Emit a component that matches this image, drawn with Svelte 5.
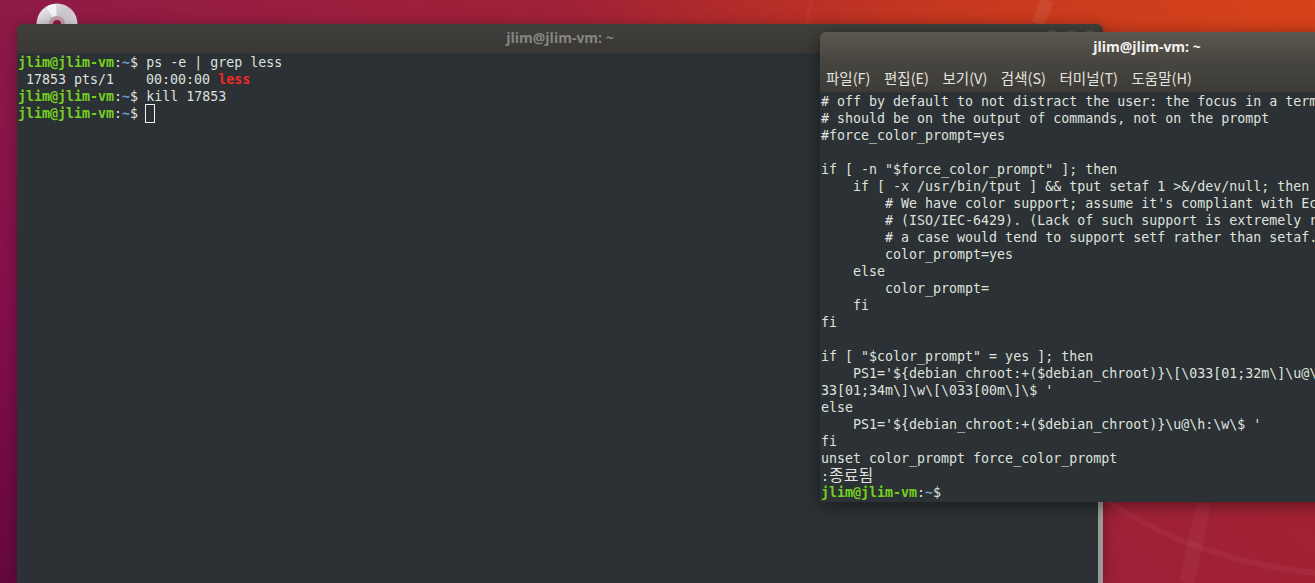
<script lang="ts">
  type Seg = { t: string; c?: string };

  const prompt: Seg[] = [
    { t: "jlim@jlim-vm", c: "green" },
    { t: ":" },
    { t: "~", c: "blue" },
    { t: "$" },
  ];

  const leftLines: Seg[][] = [
    [...prompt, { t: " ps -e | grep less" }],
    [{ t: " 17853 pts/1    00:00:00 " }, { t: "less", c: "red" }],
    [...prompt, { t: " kill 17853" }],
    [...prompt, { t: " " }],
  ];

  const rightLines: Seg[][] = [
    "# off by default to not distract the user: the focus in a terminal window",
    "# should be on the output of commands, not on the prompt",
    "#force_color_prompt=yes",
    "",
    'if [ -n "$force_color_prompt" ]; then',
    "    if [ -x /usr/bin/tput ] && tput setaf 1 >&/dev/null; then",
    "        # We have color support; assume it's compliant with Ecma-48",
    "        # (ISO/IEC-6429). (Lack of such support is extremely rare, and such",
    "        # a case would tend to support setf rather than setaf.)",
    "        color_prompt=yes",
    "    else",
    "        color_prompt=",
    "    fi",
    "fi",
    "",
    'if [ "$color_prompt" = yes ]; then',
    "    PS1='${debian_chroot:+($debian_chroot)}\\[\\033[01;32m\\]\\u@\\h\\[\\033[00m\\]:\\[\\0",
    "33[01;34m\\]\\w\\[\\033[00m\\]\\$ '",
    "else",
    "    PS1='${debian_chroot:+($debian_chroot)}\\u@\\h:\\w\\$ '",
    "fi",
    "unset color_prompt force_color_prompt",
  ].map((t) => [{ t }]);
  rightLines.push([{ t: ":" }, { t: "종료됨", c: "ko" }]);
  rightLines.push(prompt);

  const menus = ["파일(F)", "편집(E)", "보기(V)", "검색(S)", "터미널(T)", "도움말(H)"];
</script>

{#snippet line(segs: Seg[])}
  <div class="line">{#each segs as s}<span class={s.c}>{s.t}</span>{/each}</div>
{/snippet}

<div class="desktop">
  <svg class="wall" width="1315" height="583" viewBox="0 0 1315 583" fill="none">
    <path d="M1103 497 C1160 540 1240 565 1315 573" stroke="#fff" stroke-opacity="0.04" stroke-width="6" />
    <path d="M1204 502 L1187 583" stroke="#fff" stroke-opacity="0.04" stroke-width="15" />
    <path d="M1047 0 L1038 24" stroke="#fff" stroke-opacity="0.07" stroke-width="13" />
    <path d="M812 0 L806 24" stroke="#fff" stroke-opacity="0.03" stroke-width="4" />
  </svg>

  <svg class="cd" width="42" height="42" viewBox="0 0 42 42">
    <defs>
      <linearGradient id="disc" x1="0" y1="0" x2="1" y2="1">
        <stop offset="0" stop-color="#f2f2f2" />
        <stop offset="0.45" stop-color="#c9c4cc" />
        <stop offset="1" stop-color="#e8e8e8" />
      </linearGradient>
    </defs>
    <circle cx="21" cy="21" r="20.5" fill="url(#disc)" />
    <path d="M21 21 L10 4 A20 20 0 0 1 20 1 Z" fill="#fff" opacity="0.7" />
    <circle cx="21" cy="21" r="8" fill="#c49aa8" />
    <circle cx="21" cy="21" r="4" fill="#8e1a42" />
  </svg>

  <section class="win back">
    <header class="title">
      jlim@jlim-vm: ~
      <div class="ctrls"><i></i><i></i><i></i></div>
    </header>
    <div class="term">
      {#each leftLines as l, i}
        <div class="row">
          {@render line(l)}{#if i === 3}<b class="cursor"></b>{/if}
        </div>
      {/each}
    </div>
    <div class="scroll"></div>
  </section>

  <section class="win front">
    <header class="title">jlim@jlim-vm: ~</header>
    <nav class="menu">
      {#each menus as m}<span>{m}</span>{/each}
    </nav>
    <div class="term">
      {#each rightLines as l}
        {@render line(l)}
      {/each}
    </div>
  </section>
</div>

<style>
  :global(body) {
    margin: 0;
    overflow: hidden;
  }
  .desktop {
    position: relative;
    width: 1315px;
    height: 583px;
    overflow: hidden;
    background:
      radial-gradient(ellipse 760px 330px at 1315px 0, #d6431a 0%, rgba(205, 60, 28, 0.8) 50%, rgba(190, 50, 30, 0) 100%),
      linear-gradient(45deg, #640840 0%, #850f4c 15.5%, #8e1a46 31%, #9b1f3c 50%, #a5232e 80%, #ab262a 100%);
  }
  .wall,
  .cd {
    position: absolute;
  }
  .wall {
    left: 0;
    top: 0;
  }
  .cd {
    left: 36px;
    top: 3px;
  }

  .win {
    position: absolute;
    display: flex;
    flex-direction: column;
    border-radius: 6px 6px 0 0;
    overflow: hidden;
  }
  .back {
    left: 17px;
    top: 24px;
    width: 1086px;
    height: 559px;
    box-shadow: 0 2px 14px rgba(0, 0, 0, 0.3);
  }
  .front {
    left: 820px;
    top: 32px;
    width: 654px;
    height: 470px;
    box-shadow: 0 3px 16px rgba(0, 0, 0, 0.45);
  }

  .title {
    position: relative;
    flex: none;
    text-align: center;
    font: 700 14px "Open Sans", "Noto Sans", sans-serif;
  }
  .back .title {
    height: 29px;
    line-height: 28px;
    color: #858580;
    background: linear-gradient(#403f3b, #393834);
  }
  .front .title {
    height: 31px;
    line-height: 30px;
    color: #f2f1ee;
    background: linear-gradient(#5b5850, #47453f);
  }
  .ctrls {
    position: absolute;
    right: 5px;
    top: 6px;
    display: flex;
    gap: 3px;
  }
  .ctrls i {
    width: 16px;
    height: 16px;
    border-radius: 50%;
    background: #55534d;
  }

  .menu {
    flex: none;
    display: flex;
    gap: 13.5px;
    height: 29px;
    align-items: center;
    padding: 0 6px;
    color: #e4e3df;
    font: 14.5px "Noto Sans CJK KR", "Noto Sans", sans-serif;
    background: linear-gradient(#47453f, #3d3b37);
  }

  .term {
    flex: 1;
    background: #2b3134;
    color: #dfe2de;
    font: 13.3px/17px "DejaVu Sans Mono", "Noto Sans CJK KR", monospace;
    white-space: pre;
    overflow: hidden;
    padding: 1px 0 0 1px;
  }
  .row {
    display: flex;
  }
  .line {
    height: 17px;
  }
  .ko {
    font-size: 16px;
  }
  .cursor {
    box-sizing: border-box;
    width: 10px;
    height: 19px;
    margin: -1px 0 0 -1px;
    border: 1px solid #f2f2f2;
  }
  .scroll {
    position: absolute;
    right: 0;
    top: 29px;
    bottom: 0;
    width: 5px;
    background: #9a9a98;
  }
  .green {
    color: #76d01f;
    font-weight: 700;
  }
  .blue {
    color: #6f9bc9;
    font-weight: 700;
  }
  .red {
    color: #ef2929;
    font-weight: 700;
  }
</style>
